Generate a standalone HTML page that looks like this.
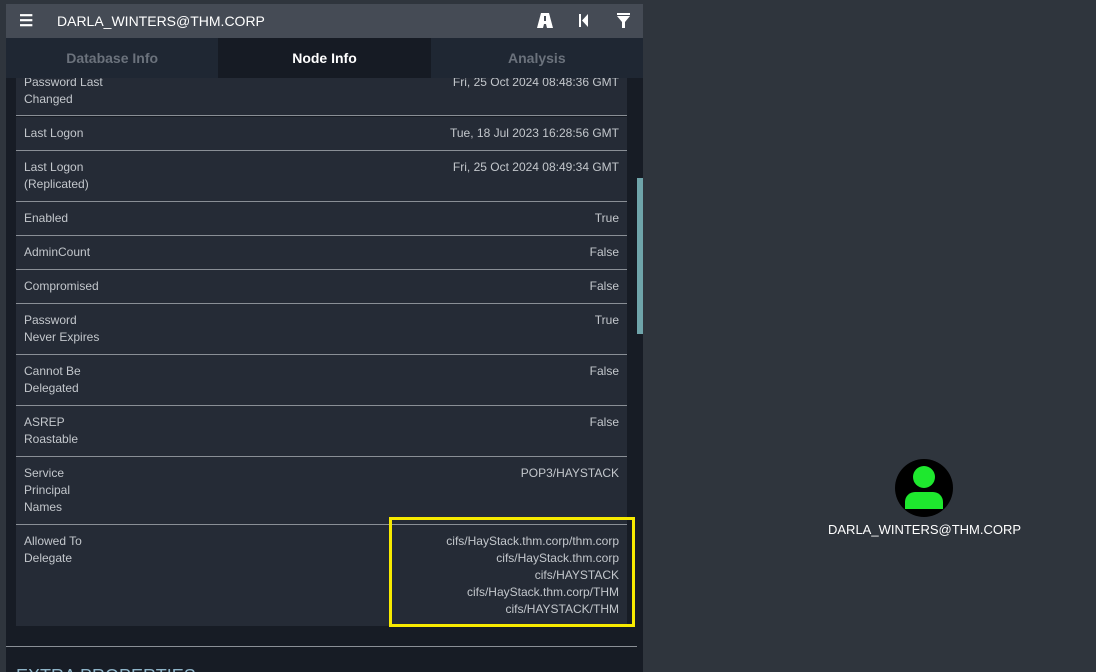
<!DOCTYPE html>
<html><head><style>
body{margin:0;width:1096px;height:672px;background:#2f353d;font-family:"Liberation Sans",sans-serif;overflow:hidden;position:relative}
.panel{position:absolute;left:6px;top:4px;width:637px;height:668px;background:#171c25;overflow:hidden}
.hdr{position:absolute;left:0;top:0;width:637px;height:34px;background:#454b55;color:#fff;font-size:14px;z-index:3}
.tabs{position:absolute;top:34px;left:0;width:637px;height:40px;background:#1f2733;display:flex;z-index:3}
.tab{flex:1;text-align:center;line-height:40px;font-size:14px;font-weight:bold;color:#6b727c}
.tab.a{background:#161b24;color:#fff}
.tbl{position:absolute;left:10px;top:74px;width:611px;background:#252b36}
.r{display:flex;justify-content:space-between;border-bottom:1px solid #8a8f96;padding:8px 8px 7px;font-size:12px;line-height:17px;color:#c3c7cc;box-sizing:border-box}
.r div:last-child{text-align:right}
.sb{position:absolute;left:631px;top:174px;width:6px;height:156px;background:#6fa4aa}
.hl{position:absolute;left:389px;top:517px;width:240px;height:104px;border:3px solid #f7ea00}
</style></head><body>
<div class="panel">
<div class="hdr">
<div style="position:absolute;left:13px;top:7px;font-size:16px;font-weight:bold">☰</div>
<div style="position:absolute;left:51px;top:9px">DARLA_WINTERS@THM.CORP</div>
<svg style="position:absolute;left:531px;top:9px" width="16" height="15"><path d="M4 0h8l4 15h-6l-1-4H7l-1 4H0z" fill="#fff"/><rect x="7" y="3" width="2" height="5" fill="#454b55"/></svg>
<svg style="position:absolute;left:573px;top:10px" width="10" height="13"><rect x="0" y="0" width="2" height="13" fill="#fff"/><path d="M9 0v13L3 6.5z" fill="#fff"/></svg>
<svg style="position:absolute;left:611px;top:9px" width="13" height="15"><rect x="0" y="0" width="13" height="2" fill="#fff"/><path d="M0 3h13L8 9v6H5V9z" fill="#fff"/></svg>
</div>
<div class="tabs"><div class="tab">Database Info</div><div class="tab a">Node Info</div><div class="tab">Analysis</div></div>
<div class="tbl" style="top:61px">
<div class="r" style="height:51px;padding-top:9px"><div>Password Last<br>Changed</div><div>Fri, 25 Oct 2024 08:48:36 GMT</div></div>
</div>
<div class="tbl" style="top:113px">
<div class="r" style="height:34px"><div>Last Logon</div><div>Tue, 18 Jul 2023 16:28:56 GMT</div></div>
<div class="r" style="height:51px"><div>Last Logon<br>(Replicated)</div><div>Fri, 25 Oct 2024 08:49:34 GMT</div></div>
<div class="r" style="height:34px"><div>Enabled</div><div>True</div></div>
<div class="r" style="height:34px"><div>AdminCount</div><div>False</div></div>
<div class="r" style="height:34px"><div>Compromised</div><div>False</div></div>
<div class="r" style="height:51px"><div>Password<br>Never Expires</div><div>True</div></div>
<div class="r" style="height:51px"><div>Cannot Be<br>Delegated</div><div>False</div></div>
<div class="r" style="height:51px"><div>ASREP<br>Roastable</div><div>False</div></div>
<div class="r" style="height:68px"><div>Service<br>Principal<br>Names</div><div>POP3/HAYSTACK</div></div>
<div class="r" style="height:101px;border:none"><div>Allowed To<br>Delegate</div><div>cifs/HayStack.thm.corp/thm.corp<br>cifs/HayStack.thm.corp<br>cifs/HAYSTACK<br>cifs/HayStack.thm.corp/THM<br>cifs/HAYSTACK/THM</div></div>
</div>
<div class="sb"></div>
<div style="position:absolute;left:0;top:642px;width:631px;height:1px;background:#8a8f96"></div>
<div style="position:absolute;left:10px;top:662px;font-size:18px;color:#8fb5c9">EXTRA PROPERTIES</div>
</div>
<div class="hl"></div>
<svg style="position:absolute;left:895px;top:459px" width="58" height="58"><circle cx="29" cy="29" r="29" fill="#000"/><circle cx="29" cy="18" r="11" fill="#1ee82e"/><path d="M10 50v-7a10 10 0 0 1 10-10h18a10 10 0 0 1 10 10v7z" fill="#1ee82e"/></svg>
<div style="position:absolute;left:828px;top:522px;font-size:13px;color:#fff">DARLA_WINTERS@THM.CORP</div>
</body></html>
